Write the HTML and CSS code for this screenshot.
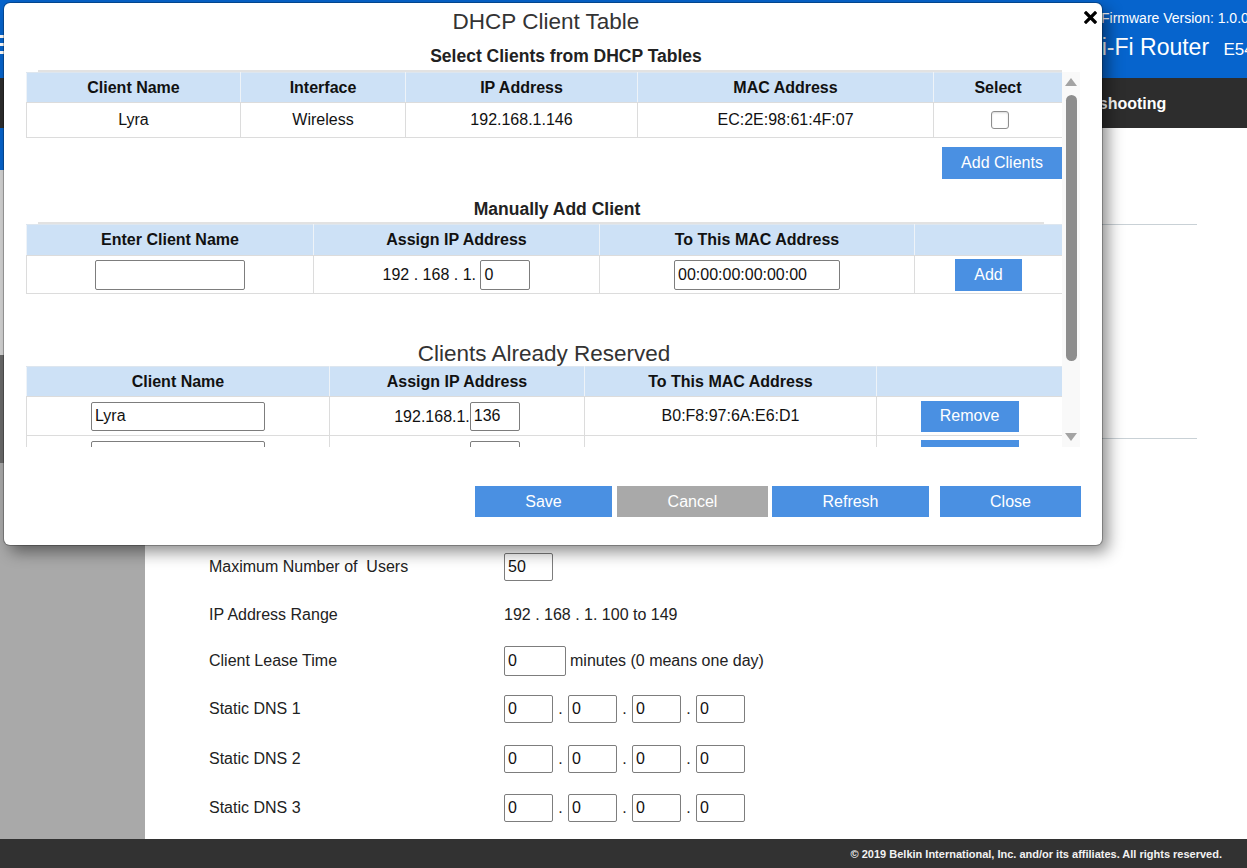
FILE: index.html
```html
<!DOCTYPE html>
<html lang="en">
<head>
<meta charset="utf-8">
<title>DHCP Client Table</title>
<link rel="stylesheet" href="styles.css">
</head>
<body>
<div class="page">
  <header class="topbar">
    <div class="hamburger"><span></span><span></span><span></span></div>
    <div class="brand">
      <div class="fw">Firmware Version: 1.0.06</div>
      <div class="product">Wi-Fi Router <span class="model">E54</span></div>
    </div>
  </header>
  <nav class="navbar">
    <div class="nav-left">
      <span class="nav-item active">Connectivity</span>
      <span class="nav-item">Wireless</span>
      <span class="nav-item">Security</span>
      <span class="nav-item">Access Restrictions</span>
      <span class="nav-item">Applications &amp; Gaming</span>
      <span class="nav-item">Administration</span>
    </div>
    <span class="nav-item">Troubleshooting</span>
  </nav>
  <div class="main">
    <aside class="sidebar">
      <div class="side-item side-active">Basic</div>
      <div class="side-item side-light">Internet Setup</div>
      <div class="side-item side-dark">Local Network</div>
    </aside>
    <section class="content">
      <div class="sec sec-one">
        <h3 class="sec-head">Router Details</h3>
      </div>
      <hr class="content-rule">
      <div class="sec sec-two">
        <h3 class="sec-head">DHCP Server Setting</h3>
      </div>
      <hr class="content-rule">
      <div class="form">
        <div class="frow h48"><span class="flabel">DHCP Server</span><span class="fval">Enabled</span></div>
        <div class="frow h48"><span class="flabel">Start IP Address</span><span class="fval">192 . 168 . 1. 100</span></div>
        <div class="frow h48"><span class="flabel">Maximum Number of&nbsp; Users</span><span class="fval"><input class="field w49" value="50"></span></div>
        <div class="frow h47"><span class="flabel">IP Address Range</span><span class="fval">192 . 168 . 1. 100 to 149</span></div>
        <div class="frow h46"><span class="flabel">Client Lease Time</span><span class="fval"><input class="field w62 tall" value="0"><span class="after">minutes (0 means one day)</span></span></div>
        <div class="frow h50"><span class="flabel">Static DNS 1</span><span class="fval ip"><input class="field w49" value="0"><span class="dot">.</span><input class="field w49" value="0"><span class="dot">.</span><input class="field w49" value="0"><span class="dot">.</span><input class="field w49" value="0"></span></div>
        <div class="frow h50"><span class="flabel">Static DNS 2</span><span class="fval ip"><input class="field w49" value="0"><span class="dot">.</span><input class="field w49" value="0"><span class="dot">.</span><input class="field w49" value="0"><span class="dot">.</span><input class="field w49" value="0"></span></div>
        <div class="frow h48"><span class="flabel">Static DNS 3</span><span class="fval ip"><input class="field w49" value="0"><span class="dot">.</span><input class="field w49" value="0"><span class="dot">.</span><input class="field w49" value="0"><span class="dot">.</span><input class="field w49" value="0"></span></div>
      </div>
    </section>
  </div>
  <footer class="footer">© 2019 Belkin International, Inc. and/or its affiliates. All rights reserved.</footer>
</div>

<div class="modal" role="dialog" aria-label="DHCP Client Table">
  <button class="modal-close" aria-label="Close">
    <svg width="13" height="13" viewBox="0 0 13 13"><path d="M2 2 L11 11 M11 2 L2 11" stroke="#000" stroke-width="3.2" stroke-linecap="square" fill="none"/></svg>
  </button>
  <div class="modal-inner">
    <h1 class="modal-title">DHCP Client Table</h1>
    <h2 class="sub-title sub-select">Select Clients from DHCP Tables</h2>
    <hr class="rule rule-top">
    <div class="scroll-wrap">
      <div class="scroll-content">
        <table class="grid t-select">
          <colgroup><col class="c1"><col class="c2"><col class="c3"><col class="c4"><col class="c5"></colgroup>
          <tr class="hrow"><th>Client Name</th><th>Interface</th><th>IP Address</th><th>MAC Address</th><th>Select</th></tr>
          <tr class="brow"><td>Lyra</td><td>Wireless</td><td>192.168.1.146</td><td>EC:2E:98:61:4F:07</td><td><span class="checkbox"></span></td></tr>
        </table>
        <div class="add-row"><button class="btn btn-add-clients">Add Clients</button></div>
        <h2 class="sub-title sub-manual">Manually Add Client</h2>
        <hr class="rule rule-manual">
        <table class="grid t-manual">
          <colgroup><col class="c1"><col class="c2"><col class="c3"><col class="c4"></colgroup>
          <tr class="hrow"><th>Enter Client Name</th><th>Assign IP Address</th><th>To This MAC Address</th><th></th></tr>
          <tr class="brow"><td><input class="tin w150" value=""></td><td><span class="ipfix">192 . 168 . 1. </span><input class="tin w50" value="0"></td><td><input class="tin w166" value="00:00:00:00:00:00"></td><td><button class="btn btn-add">Add</button></td></tr>
        </table>
        <h2 class="section-title">Clients Already Reserved</h2>
        <table class="grid t-reserved">
          <colgroup><col class="c1"><col class="c2"><col class="c3"><col class="c4"></colgroup>
          <tr class="hrow"><th>Client Name</th><th>Assign IP Address</th><th>To This MAC Address</th><th></th></tr>
          <tr class="brow"><td><input class="tin w174" value="Lyra"></td><td><span class="ipfix">192.168.1.</span><input class="tin w50" value="136"></td><td>B0:F8:97:6A:E6:D1</td><td><button class="btn btn-remove">Remove</button></td></tr>
          <tr class="brow"><td><input class="tin w174" value=""></td><td><span class="ipfix">192.168.1.</span><input class="tin w50" value=""></td><td></td><td><button class="btn btn-remove" aria-label="Remove"></button></td></tr>
        </table>
      </div>
      <div class="scrollbar" aria-hidden="true">
        <span class="sb-up"></span>
        <span class="sb-thumb"></span>
        <span class="sb-down"></span>
      </div>
    </div>
    <div class="modal-actions">
      <button class="btn act act-save">Save</button>
      <button class="btn act act-cancel">Cancel</button>
      <button class="btn act act-refresh">Refresh</button>
      <button class="btn act act-close">Close</button>
    </div>
  </div>
</div>
</body>
</html>
```

FILE: styles.css
```css
* { box-sizing: border-box; }
html, body { margin: 0; padding: 0; }
body {
  width: 1247px;
  height: 868px;
  overflow: hidden;
  position: relative;
  background: #fff;
  color: #222;
  font-family: "Liberation Sans", Arial, sans-serif;
  font-size: 16px;
}

/* ---------- background page ---------- */
.page { display: flex; flex-direction: column; height: 868px; }

.topbar {
  height: 78px;
  flex: none;
  background: #0664cd;
  color: #fff;
  display: flex;
  align-items: flex-start;
  white-space: nowrap;
  overflow: hidden;
}
.hamburger { width: 22px; flex: none; padding-top: 35px; display: flex; flex-direction: column; gap: 5px; }
.hamburger span { display: block; height: 3px; background: #fff; }
.brand { margin-left: 1054px; flex: none; }
.fw { font-size: 14px; line-height: 16px; padding-top: 10px; margin-left: 25px; }
.product { font-size: 23px; line-height: 28px; margin-top: 7px; margin-left: 4px; }
.model { font-size: 17px; margin-left: 8px; }

.navbar {
  height: 50px;
  flex: none;
  background: #2d2d2d;
  color: #fff;
  display: flex;
  align-items: center;
  padding-top: 2px;
  white-space: nowrap;
}
.nav-left { width: 1041px; flex: none; display: flex; gap: 28px; padding-left: 30px; overflow: hidden; }
.nav-item { font-weight: bold; font-size: 16px; }
.nav-item.active { color: #f39c32; }

.main { flex: 1; display: flex; min-height: 0; }
.sidebar { width: 145px; flex: none; background: #a9a9a9; display: flex; flex-direction: column; }
.side-item { font-size: 15px; padding: 12px 14px; color: #222; }
.side-active { height: 42px; background: #0664cd; color: #fff; }
.side-light { height: 185px; background: #d4d4d4; }
.side-dark { height: 108px; background: #6a6a6a; color: #fff; }

.content { flex: 1; padding: 0 50px 0 20px; display: flex; flex-direction: column; }
.sec { display: flex; align-items: flex-start; }
.sec-one { height: 96px; }
.sec-two { height: 213px; }
.sec-head { margin: 20px 0 0 44px; font-size: 18px; font-weight: normal; color: #333; }
.content-rule { margin: 0; border: 0; border-top: 1px solid #c9d1d6; height: 0; }
.form { padding: 8px 0 0 44px; display: flex; flex-direction: column; }
.frow { display: flex; align-items: center; font-size: 16px; color: #222; }
.h46 { height: 46px; } .h47 { height: 47px; } .h48 { height: 48px; } .h50 { height: 50px; }
.flabel { width: 295px; flex: none; }
.fval { display: flex; align-items: center; }
.fval.ip { align-items: baseline; }
.field {
  font-family: "Liberation Sans", Arial, sans-serif;
  font-size: 16px;
  color: #111;
  height: 28px;
  border: 1px solid #7d7d7d;
  border-radius: 2px;
  padding: 0 3px;
  background: #fff;
}
.field.tall { height: 30px; }
.w49 { width: 49px; }
.w62 { width: 62px; }
.after { margin-left: 4px; }
.dot { width: 15px; text-align: center; }

.footer {
  height: 29px;
  flex: none;
  background: #323232;
  color: #f2f2f2;
  font-size: 11px;
  font-weight: bold;
  display: flex;
  align-items: center;
  justify-content: flex-end;
  padding-right: 25px;
}

/* ---------- modal ---------- */
.modal {
  position: absolute;
  left: 4px;
  top: 3px;
  width: 1098px;
  height: 542px;
  background: #fff;
  border-radius: 6px;
  box-shadow: 0 0 0 1px rgba(0,0,0,0.25), 6px 7px 16px rgba(0,0,0,0.45);
}
.modal-close {
  position: absolute;
  top: 7px;
  right: 4px;
  width: 15px;
  height: 15px;
  padding: 1px;
  border: 0;
  background: transparent;
  display: flex;
  align-items: center;
  justify-content: center;
}
.modal-inner { padding: 0 22px; display: flex; flex-direction: column; }
.modal-title {
  width: 1040px;
  margin: 0;
  padding-top: 6px;
  font-size: 22.5px;
  line-height: 26px;
  font-weight: normal;
  color: #333;
  text-align: center;
}
.sub-title {
  margin: 0;
  font-size: 17.5px;
  line-height: 20px;
  font-weight: bold;
  color: #222;
  text-align: center;
  width: 1036px;
}
.sub-select { margin-top: 11px; padding-left: 44px; }
.rule { margin: 0; border: 0; height: 0; border-top: 2px solid #e2e2e2; }
.rule-top { margin: 4px 0 0 12px; width: 1024px; }
.scroll-wrap { display: flex; height: 375px; }
.scroll-content { width: 1036px; flex: none; overflow: hidden; }

.grid {
  width: 1036px;
  table-layout: fixed;
  border-collapse: collapse;
  font-size: 16px;
  color: #111;
}
.grid th, .grid td { border: 1px solid #dcdcdc; text-align: center; padding: 0; vertical-align: middle; }
.grid th { background: #cde1f6; font-weight: bold; border-color: #dde6ef #eef3f8 #dcdcdc; }
.t-select .hrow { height: 30px; }
.t-select .brow { height: 35px; }
.t-select .c1 { width: 214px; } .t-select .c2 { width: 165px; } .t-select .c3 { width: 232px; } .t-select .c4 { width: 296px; } .t-select .c5 { width: 129px; }
.checkbox {
  display: inline-block;
  width: 18px;
  height: 18px;
  border: 1px solid #8e8e8e;
  border-radius: 3px;
  background: #fff;
  box-shadow: inset 0 1px 2px rgba(0,0,0,0.15);
  vertical-align: middle;
  margin-left: 4px;
}

.btn {
  border: 0;
  border-radius: 0;
  background: #4a90e2;
  color: #fff;
  font-family: "Liberation Sans", Arial, sans-serif;
  font-size: 16px;
  padding: 0;
}
.add-row { display: flex; justify-content: flex-end; margin-top: 9px; }
.btn-add-clients { width: 120px; height: 32px; }

.sub-manual { margin-top: 20px; padding-left: 26px; }
.rule-manual { margin: 3px 0 0 12px; width: 1006px; }
.t-manual .hrow { height: 31px; }
.t-manual .brow { height: 38px; }
.t-manual .c1 { width: 287px; } .t-manual .c2 { width: 286px; } .t-manual .c3 { width: 315px; } .t-manual .c4 { width: 148px; }
.tin {
  font-family: "Liberation Sans", Arial, sans-serif;
  font-size: 16px;
  color: #111;
  height: 30px;
  border: 1px solid #7d7d7d;
  border-radius: 2px;
  padding: 0 3px;
  background: #fff;
  vertical-align: middle;
}
.w150 { width: 150px; } .w50 { width: 50px; } .w166 { width: 166px; } .w174 { width: 174px; height: 29px; }
.ipfix { vertical-align: middle; white-space: pre; }
.btn-add { width: 67px; height: 32px; vertical-align: middle; }

.section-title {
  margin: 47px 0 0;
  width: 1036px;
  font-size: 22.5px;
  line-height: 25px;
  font-weight: normal;
  color: #333;
  text-align: center;
}
.t-reserved .hrow { height: 30px; }
.t-reserved .brow { height: 39px; }
.t-reserved .c1 { width: 303px; } .t-reserved .c2 { width: 255px; } .t-reserved .c3 { width: 292px; } .t-reserved .c4 { width: 186px; }
.t-reserved .tin.w50 { height: 29px; }
.btn-remove { width: 98px; height: 31px; vertical-align: middle; }

.scrollbar {
  width: 18px;
  flex: none;
  background: #f9f9f9;
  display: flex;
  flex-direction: column;
  align-items: center;
  padding: 6px 0 6px;
}
.sb-up, .sb-down { width: 0; height: 0; border-left: 6px solid transparent; border-right: 6px solid transparent; }
.sb-up { border-bottom: 8px solid #a3a3a3; }
.sb-down { border-top: 8px solid #a3a3a3; margin-top: auto; }
.sb-thumb { width: 11px; height: 266px; margin-top: 9px; background: #8d8d8d; border-radius: 6px; }

.modal-actions { display: flex; justify-content: flex-end; margin-top: 39px; margin-right: -1px; }
.act { height: 31px; }
.act-save { width: 137px; margin-right: 5px; }
.act-cancel { width: 151px; margin-right: 4px; background: #a9a9a9; }
.act-refresh { width: 157px; margin-right: 11px; }
.act-close { width: 141px; }
```
